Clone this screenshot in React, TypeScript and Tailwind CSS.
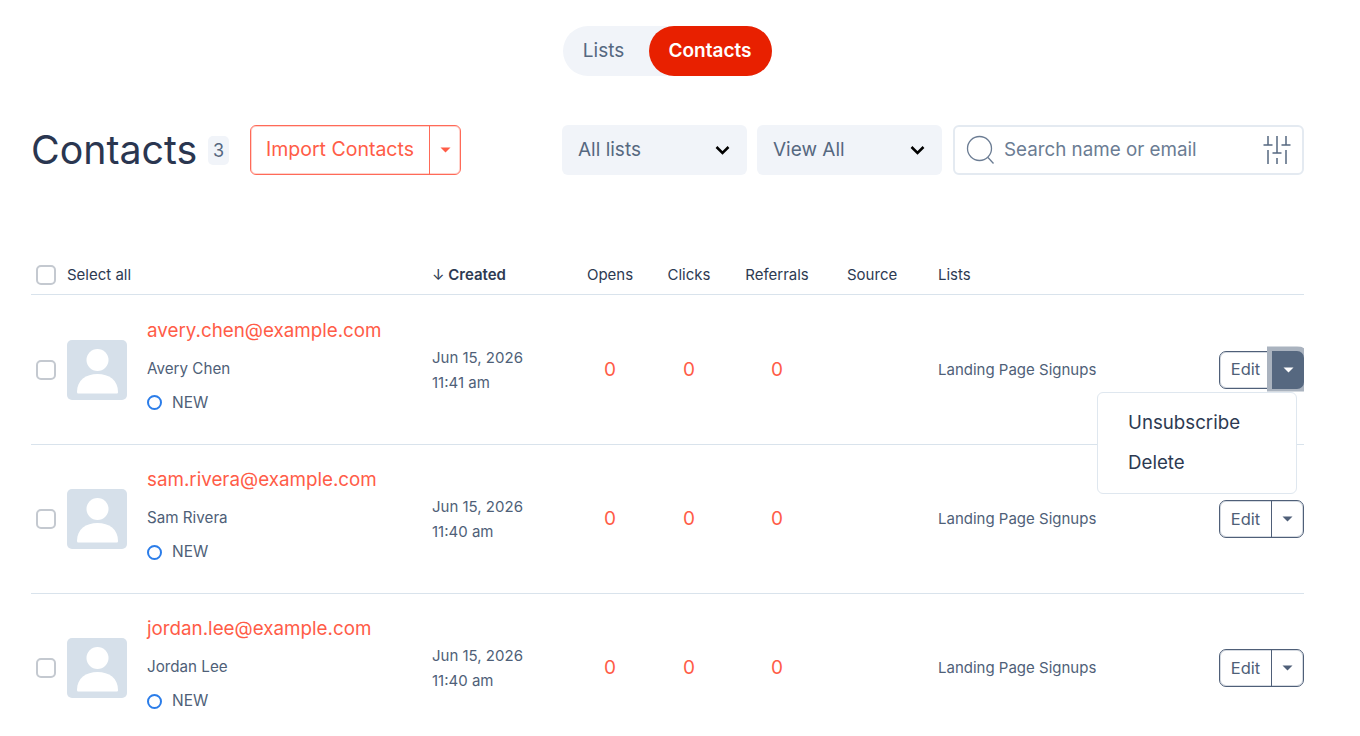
const contacts = [
  { email: 'avery.chen@example.com', name: 'Avery Chen', time: '11:41 am', open: true },
  { email: 'sam.rivera@example.com', name: 'Sam Rivera', time: '11:40 am', open: false },
  { email: 'jordan.lee@example.com', name: 'Jordan Lee', time: '11:40 am', open: false },
];

function Caret({ className }: { className: string }) {
  return (
    <svg className={className} width="11" height="6" viewBox="0 0 11 6" fill="currentColor">
      <path d="M0.5 0.5h10L5.500 5.500z" />
    </svg>
  );
}

function Chevron() {
  return (
    <svg width="15" height="10" viewBox="0 0 15 10" fill="none" stroke="#000" strokeWidth="2.5">
      <path d="M1.500 2l6 6 6-6" />
    </svg>
  );
}

function Checkbox() {
  return <span className="block w-5 h-5 rounded-[5px] border-2 border-[#c4c9d0] bg-white" />;
}

function Avatar() {
  return (
    <div className="w-[60px] h-[60px] rounded-[5px] bg-[#d6e0ea] overflow-hidden">
      <svg width="60" height="60" viewBox="0 0 60 60" fill="#fff">
        <circle cx="30.500" cy="20" r="11" />
        <path d="M10 52c0-12 9-18 20.500-18S51 40 51 52c0 1-.5 1.500-1.500 1.500h-38C10.500 53.500 10 53 10 52z" />
      </svg>
    </div>
  );
}

function Row({ email, name, time, open }: { email: string; name: string; time: string; open: boolean }) {
  return (
    <div className="relative grid grid-cols-[36px_80px_285px_144px_68px_90px_86px_118px_1fr] items-center h-[149px] first:h-[150px] border-b border-[#d9e3ec]">
      <div className="pl-[5px]"><Checkbox /></div>
      <Avatar />
      <div className="flex flex-col pb-[9px]">
        <a className="text-[18.8px] leading-[28px] text-[#ff5c47] mb-[13px] whitespace-nowrap">{email}</a>
        <span className="text-[15.2px] leading-[22px] text-[#4f5f78] mb-[12px]">{name}</span>
        <span className="flex items-center gap-[10px] text-[15.5px] leading-[22px] text-[#4f5f78]">
          <span className="w-[15px] h-[15px] rounded-full border-2 border-[#2b7de9]" />
          NEW
        </span>
      </div>
      <div className="text-[15px] leading-[25px] text-[#4f5f78]">
        <div>Jun 15, 2026</div>
        <div>{time}</div>
      </div>
      <div className="pt-[1px] text-center text-[19px] text-[#ff5c47]">0</div>
      <div className="pt-[1px] text-center text-[19px] text-[#ff5c47]">0</div>
      <div className="pt-[1px] text-center text-[19px] text-[#ff5c47]">0</div>
      <div />
      <div className="flex items-center justify-between">
        <span className="pt-[1px] text-[15px] text-[#4f5f78] whitespace-nowrap">Landing Page Signups</span>
        <div className="flex h-[38px] w-[85px] rounded-[7px] border border-[#4f5f78] shadow-[inset_0_0_0_1px_#d5dae1] bg-white text-[#4f5f78]">
          <span className="w-[52px] flex items-center justify-center text-[16.5px] border-r border-[#4f5f78]">Edit</span>
          {open ? (
            <span className="flex-1 -my-px -mr-px rounded-r-[7px] bg-[#566880] flex items-center justify-center shadow-[0_0_0_5px_#aab3bf] [clip-path:inset(-4px_0_-3px_-5px)]">
              <Caret className="text-white" />
            </span>
          ) : (
            <span className="flex-1 flex items-center justify-center">
              <Caret className="text-[#4f5f78]" />
            </span>
          )}
        </div>
      </div>
      {open && (
        <div className="absolute z-10 left-[1066px] top-[97px] w-[200px] h-[102px] rounded-[6px] border border-[#dfe7ef] bg-white py-[10px] pl-[30px] text-[18.7px] leading-[40px] text-[#2d3a52]">
          <div>Unsubscribe</div>
          <div>Delete</div>
        </div>
      )}
    </div>
  );
}

export default function App() {
  return (
    <div className="h-screen overflow-hidden bg-white pl-[31px] pr-[56px] font-['Inter','Liberation_Sans',sans-serif]">
      <div className="flex justify-center pt-[26px] pr-[1px]">
        <div className="flex h-[50px] w-[209px] rounded-full bg-[#f1f4f9]">
          <span className="w-[86px] pr-[4px] flex items-center justify-center text-[19px] text-[#566880]">Lists</span>
          <span className="flex-1 flex items-center justify-center rounded-full bg-[#e82000] text-[19px] font-semibold text-white">Contacts</span>
        </div>
      </div>

      <div className="flex items-center h-[50px] mt-[49px]">
        <h1 className="text-[39.3px] leading-[50px] text-[#2a3650] w-[166px] whitespace-nowrap">Contacts</h1>
        <span className="ml-[11px] w-[21px] h-[29px] rounded-[5px] bg-[#f1f4f9] flex items-center justify-center text-[18px] text-[#566880]">3</span>
        <div className="ml-[21px] flex h-[50px] w-[211px] rounded-[6px] border border-[#ff6a58] shadow-[inset_0_0_0_1px_#ffd3cd] text-[#ff5c47]">
          <span className="w-[179px] flex items-center justify-center text-[19.5px] border-r border-[#ff6a58] whitespace-nowrap">Import Contacts</span>
          <span className="flex-1 flex items-center justify-center"><Caret className="text-[#ff5c47]" /></span>
        </div>
        <div className="ml-[101px] flex items-center justify-between w-[185px] h-[50px] rounded-[6px] bg-[#f1f4f9] pl-[16px] pr-[17px] text-[19px] text-[#566880]">
          All lists <Chevron />
        </div>
        <div className="ml-[10px] flex items-center justify-between w-[185px] h-[50px] rounded-[6px] bg-[#f1f4f9] pl-[16px] pr-[17px] text-[19px] text-[#566880]">
          View All <Chevron />
        </div>
        <div className="ml-[11px] flex items-center w-[351px] h-[50px] rounded-[6px] border-2 border-[#e4eaf1] bg-white pl-[11px] pr-[10px]">
          <svg width="30" height="30" viewBox="0 0 30 30" fill="none" stroke="#6b7c93" strokeWidth="1.3">
            <circle cx="13.500" cy="13.500" r="12" />
            <path d="M22 22.500l5.500 6" />
          </svg>
          <span className="ml-[8px] pt-[1px] flex-1 text-[18.8px] text-[#6b7c93] whitespace-nowrap">Search name or email</span>
          <svg width="30" height="30" viewBox="0 0 30 30" fill="none" stroke="#566880" strokeWidth="1.5">
            <path d="M6 1v9M1.500 10h9M6 15v14M15 1v17M10.500 18h9M15 23v6M24 1v9M19.500 10h9M24 15v14" />
          </svg>
        </div>
      </div>

      <div className="mt-[80px] pt-[1px] grid grid-cols-[36px_80px_285px_144px_68px_90px_86px_118px_1fr] items-center h-[40px] border-b border-[#d9e3ec] text-[15px] text-[#2d3a52]">
        <div className="pl-[5px]"><Checkbox /></div>
        <div className="col-span-2">Select all</div>
        <div className="font-semibold"><span className="font-normal">↓</span> Created</div>
        <div className="text-center">Opens</div>
        <div className="text-center">Clicks</div>
        <div className="text-center">Referrals</div>
        <div className="pl-[27px]">Source</div>
        <div>Lists</div>
      </div>

      <div>
        {contacts.map((c) => (
          <Row key={c.email} {...c} />
        ))}
      </div>
    </div>
  );
}
